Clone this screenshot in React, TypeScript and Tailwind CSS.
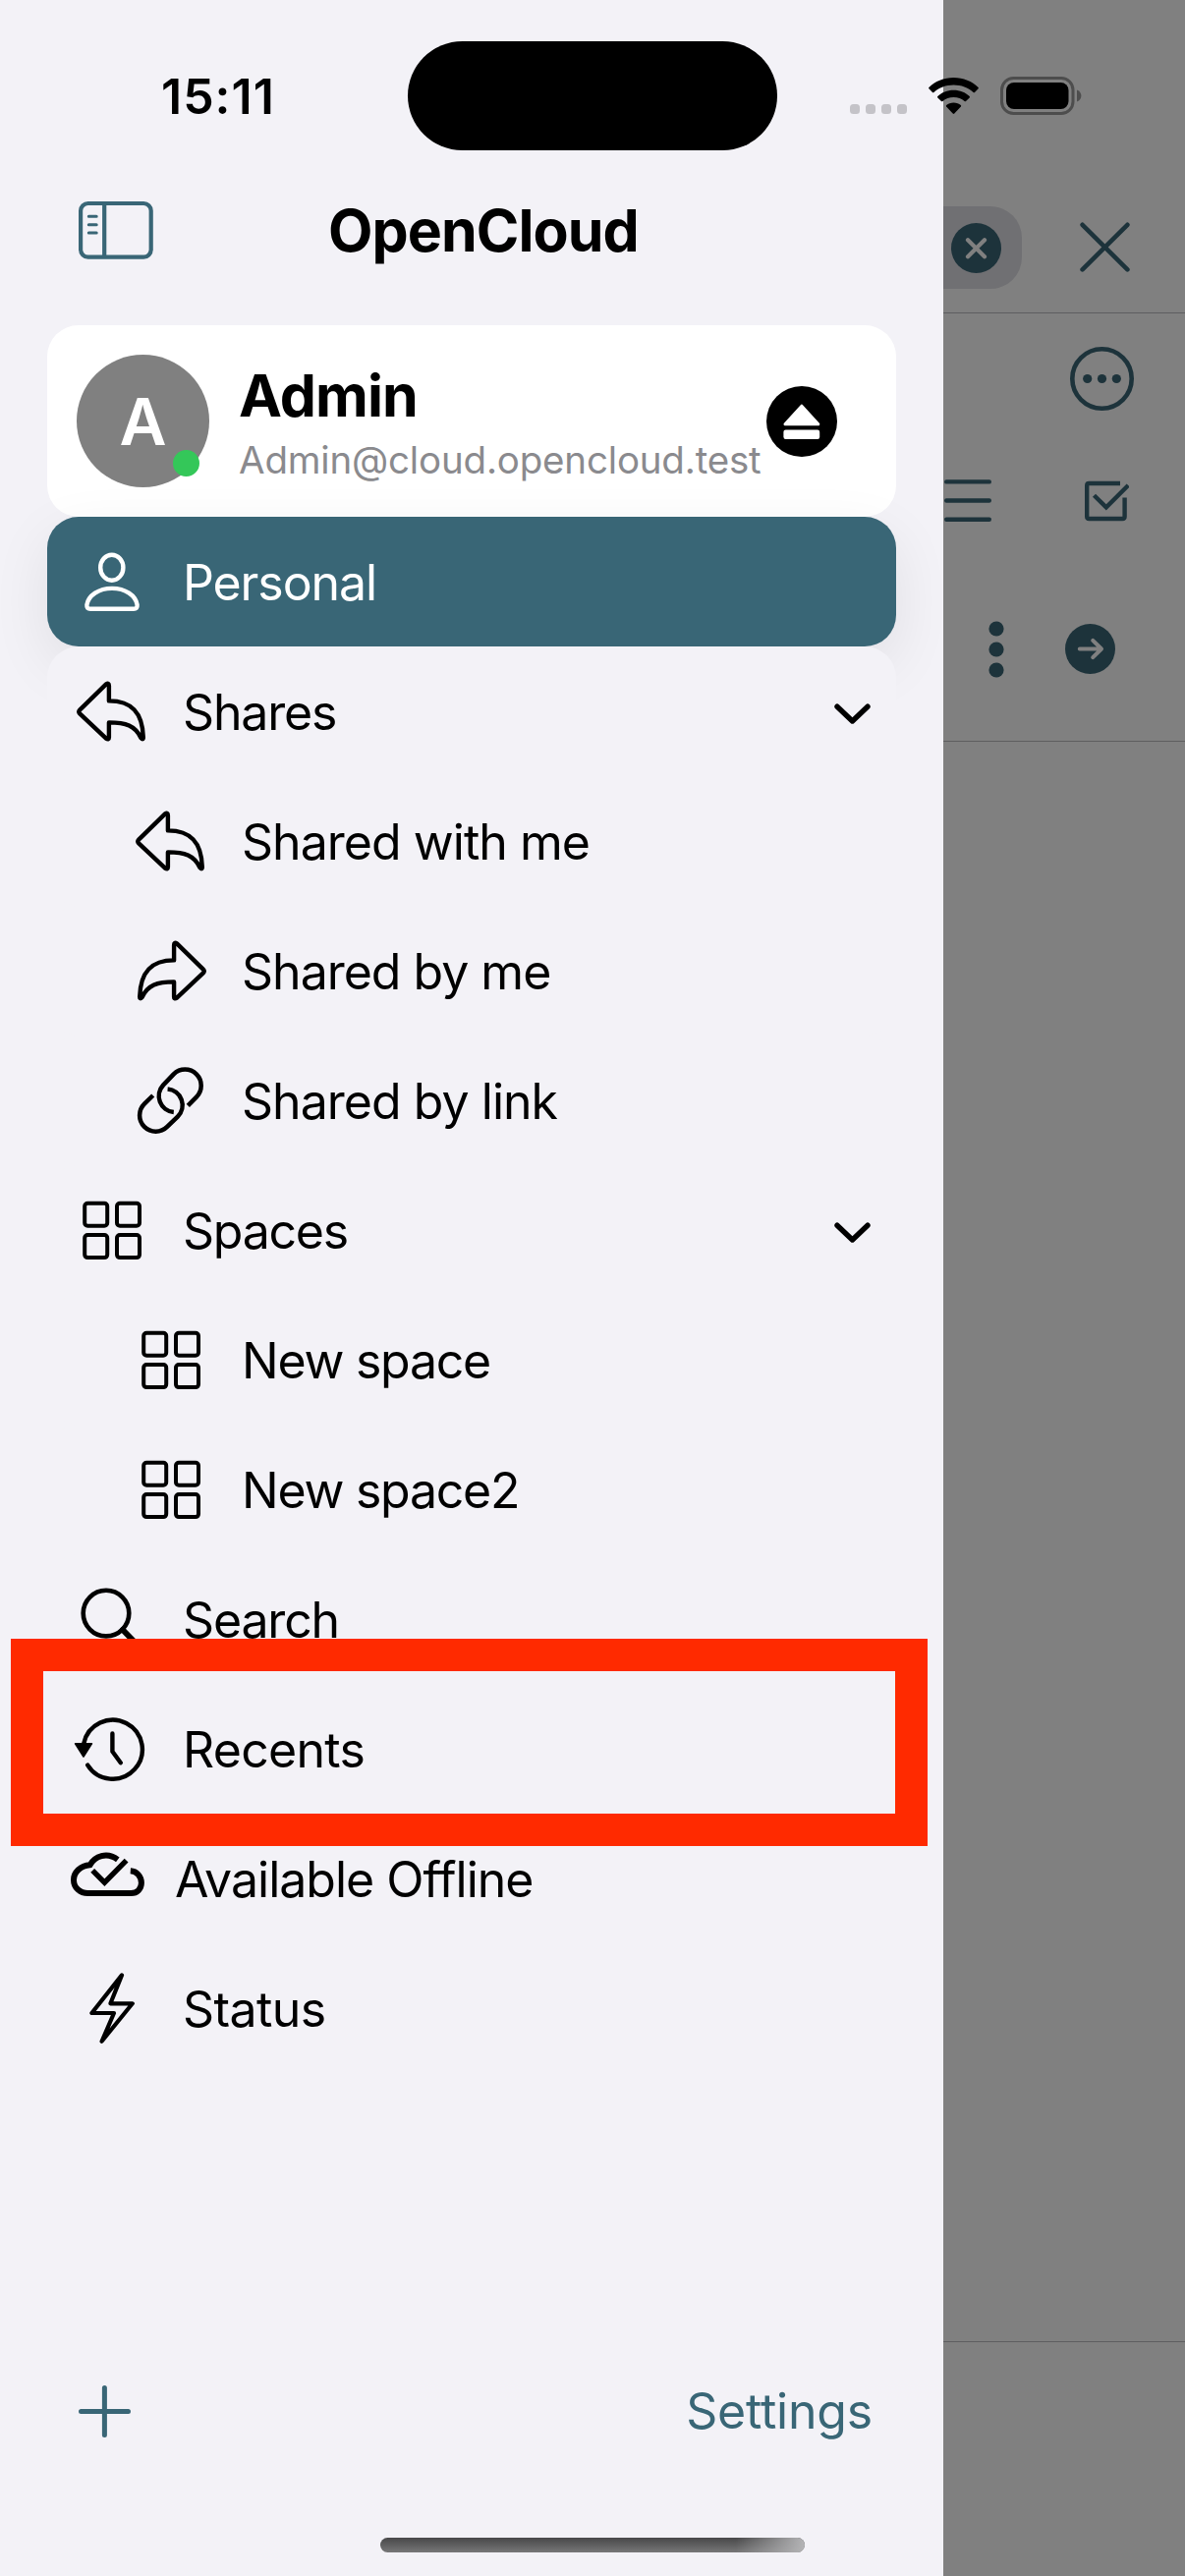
import type { ReactNode } from "react";

const FONT = "font-['Inter','Liberation_Sans',sans-serif]";

/* ---------- sidebar icons (80 x 80 artboard) ---------- */

function Glyph({ children, width = 4.4 }: { children: ReactNode; width?: number }) {
  return (
    <svg
      className="h-20 w-20 shrink-0 overflow-visible"
      viewBox="0 0 80 80"
      fill="none"
      stroke="currentColor"
      strokeWidth={width}
      strokeLinecap="round"
      strokeLinejoin="round"
    >
      {children}
    </svg>
  );
}

function PersonIcon() {
  return (
    <Glyph>
      <ellipse cx="39.8" cy="25.7" rx="11.6" ry="13" />
      <path d="M18 67.8 H62 Q66 67.8 65.6 63.6 C64 54 53.5 46.9 40 46.9 C26.5 46.9 16 54 14.4 63.6 Q14 67.8 18 67.8 Z" />
    </Glyph>
  );
}

const ARROW =
  "M7.2 38.6 L34 12.4 Q36.9 10.6 36.9 14 V29.4 C60 29.4 71.2 41 71.8 66.6 Q71.8 69.6 69.4 67 C63.5 54.5 54 51.4 36.9 51.4 V66.4 Q36.9 69.6 34 67.6 L7.2 42.4 Q5.2 40.5 7.2 38.6 Z";

function ReplyIcon() {
  return (
    <Glyph>
      <path d={ARROW} />
    </Glyph>
  );
}

function ForwardIcon() {
  return (
    <Glyph>
      <path d={ARROW} transform="translate(80 0) scale(-1 1)" />
    </Glyph>
  );
}

function LinkIcon() {
  return (
    <Glyph width={4.5}>
      <g transform="translate(6 7)" strokeLinecap="butt">
        <path d="M51.3 38.4 L59.9 29.6 A16.4 16.4 0 0 0 36.7 6.4 L26.2 17.4 A16.4 16.4 0 0 0 36.8 45" />
        <path d="M15.7 28 L6.9 36.7 A16.4 16.4 0 0 0 30.1 59.9 L40.8 49.6 A16.4 16.4 0 0 0 30.6 21.6" />
      </g>
    </Glyph>
  );
}

function GridIcon() {
  return (
    <Glyph width={4}>
      <rect x="12.2" y="12.8" width="23" height="23" rx="3" />
      <rect x="45" y="12.8" width="23" height="23" rx="3" />
      <rect x="12.2" y="45.1" width="23" height="23" rx="3" />
      <rect x="45" y="45.1" width="23" height="23" rx="3" />
    </Glyph>
  );
}

function SearchIcon() {
  return (
    <Glyph width={4.6}>
      <circle cx="34" cy="34.1" r="23.3" />
      <path d="M51 51 L66 66.5" strokeWidth="6" />
    </Glyph>
  );
}

function RecentsIcon() {
  return (
    <Glyph>
      <path d="M11.3 34.5 A30.1 30.1 0 1 1 15.2 56.6" />
      <path d="M2.6 34.8 H19.4 L11 48 Z" fill="currentColor" strokeWidth="1.6" />
      <path d="M40.4 24.4 V42.8 L48.8 54.2" />
    </Glyph>
  );
}

function CloudCheckIcon() {
  return (
    <Glyph width={6}>
      <g strokeLinecap="butt" strokeLinejoin="miter">
        <path d="M45.8 20.8 C34.5 12.4 22.5 17.6 17.6 26.2 C7.8 26.8 1 34 1 41.4 C1 49.6 7.6 55 15.4 55 H59.5 C65.6 55 69.9 50.6 69.9 44.6 C69.9 37.6 65 32.6 58.8 32.2" />
        <path d="M20.2 31.8 L32.4 44.2 L54.6 21.6" strokeWidth="5.4" />
      </g>
    </Glyph>
  );
}

function BoltIcon() {
  return (
    <Glyph width={4.2}>
      <path d="M50 6.400 L19.400 45 H42 L29.600 73.800 L60.800 35.300 H38.400 Z" />
    </Glyph>
  );
}

function Chevron() {
  return (
    <svg className="mt-[6px] mr-[26px] ml-auto h-[22px] w-[37px]" viewBox="0 0 37 22" fill="none">
      <path
        d="M3 3.2 L18.5 18 L34 3.2"
        stroke="currentColor"
        strokeWidth="5.4"
        strokeLinecap="round"
        strokeLinejoin="round"
      />
    </svg>
  );
}

/* ---------- sidebar rows ---------- */

type Item = {
  label: string;
  icon: ReactNode;
  nested?: boolean;
  open?: boolean;
  selected?: boolean;
  labelClass: string;
};

const ITEMS: Item[] = [
  { label: "Personal", icon: <PersonIcon />, selected: true, labelClass: "ml-[32px] tracking-[-1.1px]" },
  { label: "Shares", icon: <ReplyIcon />, open: true, labelClass: "ml-[32px] tracking-[-1.15px]" },
  { label: "Shared with me", icon: <ReplyIcon />, nested: true, labelClass: "ml-[32px] tracking-[-0.96px]" },
  { label: "Shared by me", icon: <ForwardIcon />, nested: true, labelClass: "ml-[32px] tracking-[-1px]" },
  { label: "Shared by link", icon: <LinkIcon />, nested: true, labelClass: "ml-[32px] tracking-[-0.96px]" },
  { label: "Spaces", icon: <GridIcon />, open: true, labelClass: "ml-[32px] tracking-[-1.25px]" },
  { label: "New space", icon: <GridIcon />, nested: true, labelClass: "ml-[32px] tracking-[-1.25px]" },
  { label: "New space2", icon: <GridIcon />, nested: true, labelClass: "ml-[32px] tracking-[-1.25px]" },
  { label: "Search", icon: <SearchIcon />, labelClass: "ml-[32px] tracking-[-1.15px]" },
  { label: "Recents", icon: <RecentsIcon />, labelClass: "ml-[32px] tracking-[-0.7px]" },
  { label: "Available Offline", icon: <CloudCheckIcon />, labelClass: "ml-[24px] tracking-[-1px]" },
  { label: "Status", icon: <BoltIcon />, labelClass: "ml-[32px] tracking-[-0.6px]" },
];

function Row({ item }: { item: Item }) {
  const tone = item.selected
    ? "bg-[#396676] text-white shadow-[0_20px_60px_rgba(0,0,0,0.08)]"
    : "bg-[#f3f2f7] text-black";
  const inset = item.nested ? "pl-[86px]" : "pl-[26px]";
  return (
    <li className={`relative flex h-[132px] items-center rounded-[32px] ${tone} ${inset}`}>
      {item.icon}
      <span className={`pt-[2px] text-[50px] leading-[60px] whitespace-nowrap ${item.labelClass}`}>{item.label}</span>
      {item.open && <Chevron />}
    </li>
  );
}

function AccountCard() {
  return (
    <div className="mx-[48px] mt-[25px] flex h-[195px] items-start rounded-[32px] bg-white pl-[30px]">
      <div className="relative mt-[30px] flex h-[135px] w-[135px] shrink-0 items-center justify-center rounded-full bg-[#808080]">
        <span className="text-[66px] leading-none font-semibold text-white">A</span>
        <span className="absolute right-[10px] bottom-[11px] h-[27px] w-[27px] rounded-full bg-[#34c759]" />
      </div>
      <div className="mt-[39px] ml-[30px] w-[536px] whitespace-nowrap">
        <div className="text-[59px] leading-[66px] font-bold tracking-[-0.9px] text-black">Admin</div>
        <div className="mt-[7px] text-[38.5px] leading-[50px] tracking-[-0.18px] text-[#8a8a8e]">
          Admin@cloud.opencloud.test
        </div>
      </div>
      <svg className="mt-[62px] ml-px h-[72px] w-[72px]" viewBox="0 0 72 72">
        <circle cx="36" cy="36" r="36" fill="#000" />
        <path
          d="M35.9 20.2 L52.8 38.8 H19 Z"
          fill="#fff"
          stroke="#fff"
          strokeWidth="3"
          strokeLinejoin="round"
        />
        <rect x="17.4" y="44.6" width="36.8" height="9.4" rx="2.2" fill="#fff" />
      </svg>
    </div>
  );
}

function Sidebar() {
  return (
    <aside className="relative flex h-full w-[960px] shrink-0 flex-col overflow-hidden bg-[#f3f2f7]">
      <header className="mt-[162px] flex h-[144px] items-center pl-[80px]">
        <svg className="h-[60px] w-[76px]" viewBox="0 0 76 60" fill="none" stroke="#396676" strokeWidth="4.2">
          <rect x="2.1" y="3" width="71.6" height="54.6" rx="7.5" />
          <path d="M26.2 3 V57" />
          <path d="M10.3 16.2 H18.2 M10.3 24.7 H18.2 M10.3 33.1 H18.2" strokeWidth="3" strokeLinecap="round" />
        </svg>
        <h1 className="ml-[178px] pt-px text-[59px] leading-[72px] font-bold tracking-[-0.95px] whitespace-nowrap text-black">
          OpenCloud
        </h1>
      </header>
      <AccountCard />
      <ul className="mx-[48px]">
        {ITEMS.map((item) => (
          <Row key={item.label} item={item} />
        ))}
      </ul>
      <div className="absolute top-[1668px] left-[11px] h-[211px] w-[933px] border-[33px] border-[#ff2a00]" />
      <footer className="mt-auto mb-[118px] flex h-[100px] items-center justify-between pr-[72px] pl-[80px] text-[#396676]">
        <svg className="h-[53px] w-[53px]" viewBox="0 0 53 53" stroke="currentColor" strokeWidth="5" strokeLinecap="round">
          <path d="M26.4 2.6 V50.4 M2.5 26.5 H50.5" />
        </svg>
        <span className="text-[50px] leading-[60px] tracking-[-0.2px]">Settings</span>
      </footer>
      <div className="absolute top-[2583px] left-[387px] h-[15px] w-[432px] overflow-hidden rounded-full bg-linear-to-b from-[#484849] to-[#777778]">
        <div className="ml-auto h-full w-[70px] bg-linear-to-r from-transparent to-[#b4b4b6]" />
      </div>
    </aside>
  );
}

/* ---------- dimmed page behind the sidebar ---------- */

function Backdrop() {
  return (
    <main className="flex h-full w-[246px] flex-col bg-[#808080] text-[#1d333b]">
      <div className="flex h-[319px] items-start border-b border-[#5e5e60] pt-[210px]">
        <div className="flex h-[84px] w-[80px] items-center rounded-r-[32px] bg-[#707073] pl-[8px]">
          <svg className="h-[51px] w-[51px]" viewBox="0 0 51 51">
            <circle cx="25.5" cy="25.5" r="25.5" fill="currentColor" />
            <path d="M17 17.2 L34 34.2 M34 17.2 L17 34.2" stroke="#808080" strokeWidth="4.2" strokeLinecap="round" />
          </svg>
        </div>
        <svg className="mt-[16px] ml-[59px] h-[51px] w-[51px]" viewBox="0 0 51 51" stroke="currentColor" strokeWidth="4.6" strokeLinecap="round">
          <path d="M2.6 2.8 L48.4 48.4 M48.4 2.8 L2.6 48.4" />
        </svg>
      </div>
      <div className="flex h-[133px] items-center justify-end pr-[52px]">
        <svg className="h-[65px] w-[65px]" viewBox="0 0 65 65" fill="currentColor">
          <circle cx="32.5" cy="32.5" r="30.2" fill="none" stroke="currentColor" strokeWidth="4.6" />
          <circle cx="17.7" cy="32.5" r="4.6" />
          <circle cx="32.5" cy="32.5" r="4.6" />
          <circle cx="47.3" cy="32.5" r="4.6" />
        </svg>
      </div>
      <div className="flex h-[115px] items-center justify-between pr-[57px] pl-px">
        <svg className="h-[43px] w-[48px]" viewBox="0 0 48 43" stroke="currentColor" strokeWidth="4.4" strokeLinecap="round">
          <path d="M2.2 2.4 H45.8 M2.2 21.5 H45.8 M2.2 40.7 H45.8" />
        </svg>
        <svg className="h-[42px] w-[46px]" viewBox="0 0 46 42" fill="none" stroke="currentColor" strokeWidth="4.4">
          <path d="M37 3 H5.4 Q3.2 3 3.2 5.2 V36.8 Q3.2 39 5.4 39 H39.4 Q41.6 39 41.6 36.8 V17.5" />
          <path d="M10.5 15.2 L22.8 27.4 L45.2 5" />
        </svg>
      </div>
      <div className="flex h-[188px] items-center border-b border-[#5e5e60] pl-[45.5px]">
        <svg className="h-[58px] w-[16px]" viewBox="0 0 16 58" fill="currentColor">
          <circle cx="8" cy="8" r="7.6" />
          <circle cx="8" cy="29" r="7.6" />
          <circle cx="8" cy="50" r="7.6" />
        </svg>
        <svg className="ml-[62.5px] h-[51px] w-[51px]" viewBox="0 0 51 51" fill="none">
          <circle cx="25.5" cy="25.5" r="25.5" fill="currentColor" />
          <path
            d="M14.8 25.5 H36.8 M28.2 16.8 L37 25.5 L28.2 34.2"
            stroke="#808080"
            strokeWidth="4"
            strokeLinecap="round"
            strokeLinejoin="round"
          />
        </svg>
      </div>
      <div className="h-[1629px] border-b border-[#5e5e60]" />
    </main>
  );
}

/* ---------- device status bar ---------- */

function StatusBar() {
  return (
    <div className="absolute inset-x-0 top-0 flex h-[153px] items-start text-black">
      <span className="mt-[68px] ml-[164px] w-[251px] text-[50px] leading-[60px] font-semibold tracking-[1px]">15:11</span>
      <div className="mt-[41.5px] h-[111px] w-[376px] rounded-full bg-black" />
      <div className="mt-[106px] ml-[74px] flex gap-[6px]">
        {[0, 1, 2, 3].map((dot) => (
          <span key={dot} className="h-[10px] w-[10px] rounded-[3.5px] bg-[#c4c3c8]" />
        ))}
      </div>
      <svg className="mt-[79px] ml-[22px] h-[38px] w-[51px]" viewBox="0 0 51 38">
        <path d="M25.5 0 C35.4 0 44.4 3.8 50.6 9.9 Q51.2 10.6 50.6 11.3 L47 15 Q46.3 15.7 45.6 15 C40.4 10.2 33.3 7.5 25.5 7.5 C17.7 7.5 10.6 10.2 5.4 15 Q4.7 15.7 4 15 L0.4 11.3 Q-0.2 10.6 0.4 9.9 C6.6 3.8 15.6 0 25.5 0 Z" />
        <path d="M25.5 12.7 C31.9 12.7 37.7 15.1 41.7 19 Q42.3 19.7 41.7 20.4 L38 24 Q37.3 24.7 36.6 24 C33.7 21.5 29.9 20.1 25.5 20.1 C21.1 20.1 17.3 21.5 14.4 24 Q13.7 24.7 13 24 L9.3 20.4 Q8.7 19.7 9.3 19 C13.3 15.1 19.1 12.7 25.5 12.7 Z" />
        <path d="M25.5 25.4 C28.5 25.4 31 26.5 32.8 28.1 Q33.5 28.8 32.9 29.5 L26.3 36.6 Q25.5 37.4 24.7 36.6 L18.1 29.5 Q17.5 28.8 18.2 28.1 C20 26.5 22.5 25.4 25.5 25.4 Z" />
      </svg>
      <svg className="mt-[78px] ml-[22px] h-[39px] w-[83px]" viewBox="0 0 83 39">
        <rect x="1.5" y="1.5" width="72.5" height="36" rx="12" fill="none" stroke="#4d4d4d" strokeWidth="3" />
        <rect x="6" y="6" width="63.5" height="27" rx="8" />
        <path d="M78 13.5 C81 14.7 82.4 17 82.4 19.5 C82.4 22 81 24.3 78 25.5 Z" fill="#4d4d4d" />
      </svg>
    </div>
  );
}

export default function App() {
  return (
    <div className={`relative flex h-[2622px] w-[1206px] overflow-hidden antialiased ${FONT}`}>
      <Sidebar />
      <Backdrop />
      <StatusBar />
    </div>
  );
}
